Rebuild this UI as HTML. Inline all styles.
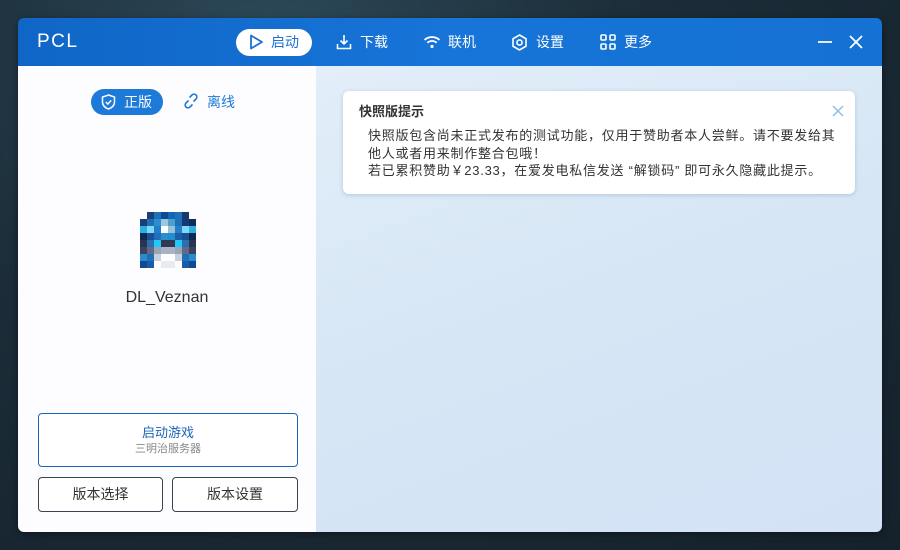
<!DOCTYPE html>
<html><head><meta charset="utf-8"><style>
*{margin:0;padding:0;box-sizing:border-box}
body{width:900px;height:550px;overflow:hidden;position:relative;font-family:"Liberation Sans","Noto Sans CJK SC",sans-serif;
background:radial-gradient(ellipse at 30% 10%,#2d4a5a 0%,#1c2e3a 40%,#15212b 100%);}
.win{position:absolute;left:18px;top:18px;width:864px;height:514px;border-radius:6px;overflow:hidden;box-shadow:0 2px 8px rgba(0,0,0,.4)}
.bar{position:absolute;left:0;top:0;width:864px;height:48px;background:linear-gradient(90deg,#0f66c6,#1774d8 50%,#1572d4)}
.logo{position:absolute;left:19px;top:13px;color:#fff;font-size:19px;letter-spacing:1.5px}
.nav{position:absolute;top:11px;height:27px;color:#fff;font-size:14px;line-height:27px}
.nav svg{position:absolute;top:5px}
.nav span{position:absolute;white-space:nowrap}
.left{position:absolute;left:0;top:48px;width:298px;height:466px;background:#fdfdff}
.right{position:absolute;left:298px;top:48px;width:566px;height:466px;background:linear-gradient(160deg,#e2eef9 0%,#d6e6f5 50%,#d3e2f5 100%)}
.card{position:absolute;left:27px;top:25px;width:512px;height:103px;background:#fff;border-radius:6px;box-shadow:0 1px 4px rgba(60,90,130,.25)}
.btn{position:absolute;border:1px solid #3a4350;border-radius:4px;text-align:center;font-size:14px;color:#333;background:#fff}
.px{position:absolute;left:122px;top:146px;display:grid;grid-template-columns:repeat(8,7px);grid-template-rows:repeat(8,7px)}
</style></head><body>
<div class="win">
<div class="bar">
 <div class="logo">PCL</div>
 <div style="position:absolute;left:218px;top:11px;width:76px;height:27px;border-radius:14px;background:#fff"></div>
 <div class="nav" style="left:230px;color:#1a72d6">
  <svg width="16" height="16" viewBox="0 0 16 16"><path d="M3 1.5 L14 8 L3 14.5 Z" fill="none" stroke="#1a72d6" stroke-width="1.8" stroke-linejoin="round"/></svg>
  <span style="left:23px">启动</span></div>
 <div class="nav" style="left:318px">
  <svg width="16" height="16" viewBox="0 0 16 16"><path d="M8 1v9M4.5 6.5 8 10l3.5-3.5M1.5 10v4.5h13V10" fill="none" stroke="#fff" stroke-width="1.6"/></svg>
  <span style="left:24px">下载</span></div>
 <div class="nav" style="left:405px">
  <svg width="18" height="16" viewBox="0 0 18 16"><path d="M1.5 6a11 11 0 0 1 15 0M4.3 8.8a7 7 0 0 1 9.4 0" fill="none" stroke="#fff" stroke-width="1.8"/><circle cx="9" cy="12.5" r="1.6" fill="#fff"/></svg>
  <span style="left:25px">联机</span></div>
 <div class="nav" style="left:493px">
  <svg width="17" height="17" viewBox="0 0 17 17"><path d="M8.5 1 15 4.75v7.5L8.5 16 2 12.25v-7.5Z" fill="none" stroke="#fff" stroke-width="1.6"/><circle cx="8.5" cy="8.5" r="2.6" fill="none" stroke="#fff" stroke-width="1.6"/></svg>
  <span style="left:25px">设置</span></div>
 <div class="nav" style="left:582px">
  <svg width="16" height="16" viewBox="0 0 16 16" fill="none" stroke="#fff" stroke-width="1.6"><rect x="1" y="1" width="5" height="5" rx="1"/><rect x="10" y="1" width="5" height="5" rx="1"/><rect x="1" y="10" width="5" height="5" rx="1"/><rect x="10" y="10" width="5" height="5" rx="1"/></svg>
  <span style="left:24px">更多</span></div>
 <svg style="position:absolute;left:799px;top:17px" width="16" height="14"><path d="M1 7h14" stroke="#fff" stroke-width="1.8"/></svg>
 <svg style="position:absolute;left:831px;top:17px" width="14" height="14"><path d="M1 1l12 12M13 1 1 13" stroke="#fff" stroke-width="1.8"/></svg>
</div>
<div class="left">
 <div style="position:absolute;left:73px;top:23px;width:72px;height:26px;border-radius:13px;background:#1e7ad8;color:#fff;font-size:14px;line-height:26px">
  <svg style="position:absolute;left:10px;top:5px" width="15" height="16" viewBox="0 0 15 16"><path d="M7.5 1 13.5 3v5c0 3.5-2.8 6-6 7-3.2-1-6-3.5-6-7V3Z" fill="none" stroke="#fff" stroke-width="1.5"/><path d="M4.8 8l2 2 3.4-3.6" fill="none" stroke="#fff" stroke-width="1.5"/></svg>
  <span style="position:absolute;left:33px">正版</span></div>
 <svg style="position:absolute;left:165px;top:27px" width="16" height="16" viewBox="0 0 16 16" fill="none" stroke="#1e7ad8" stroke-width="1.6"><path d="M6.5 4.5 9 2a2.8 2.8 0 0 1 4 4l-2.5 2.5M9.5 11.5 7 14a2.8 2.8 0 0 1-4-4l2.5-2.5"/></svg>
 <div style="position:absolute;left:189px;top:23px;line-height:26px;font-size:14px;color:#1e7ad8">离线</div>
 <div class="px">
  <i></i><i style="background:#1a3f78"></i><i style="background:#1f70b8"></i><i style="background:#0d4a95"></i><i style="background:#1565b5"></i><i style="background:#1f70b8"></i><i style="background:#163a70"></i><i></i>
  <i style="background:#1a3f78"></i><i style="background:#1f6fb5"></i><i style="background:#2c8ed0"></i><i style="background:#9bc8dc"></i><i style="background:#4f9fcc"></i><i style="background:#1f6fb5"></i><i style="background:#163a70"></i><i style="background:#102c5a"></i>
  <i style="background:#2ab0e0"></i><i style="background:#7fd8f5"></i><i style="background:#1f7fc8"></i><i style="background:#fff"></i><i style="background:#9cc0d8"></i><i style="background:#1f7fc8"></i><i style="background:#7fd8f5"></i><i style="background:#2ab0e0"></i>
  <i style="background:#0e2a50"></i><i style="background:#1a4f95"></i><i style="background:#1f70b8"></i><i style="background:#2c8ed0"></i><i style="background:#1f8fd0"></i><i style="background:#1a5fa5"></i><i style="background:#1a4f95"></i><i style="background:#0e2a50"></i>
  <i style="background:#2a3450"></i><i style="background:#2a6fb0"></i><i style="background:#24c8f5"></i><i style="background:#303a55"></i><i style="background:#303a55"></i><i style="background:#24c8f5"></i><i style="background:#2a6fb0"></i><i style="background:#2a3450"></i>
  <i style="background:#3a4260"></i><i style="background:#606a85"></i><i style="background:#9aa5b8"></i><i style="background:#a8b4c5"></i><i style="background:#a8b4c5"></i><i style="background:#9aa5b8"></i><i style="background:#606a85"></i><i style="background:#3a4260"></i>
  <i style="background:#2a8ad0"></i><i style="background:#1f70b8"></i><i style="background:#c8d0dc"></i><i style="background:#fff"></i><i style="background:#fff"></i><i style="background:#c8d0dc"></i><i style="background:#1f70b8"></i><i style="background:#2a8ad0"></i>
  <i style="background:#124a90"></i><i style="background:#1a5ca8"></i><i></i><i style="background:#e8ecf0"></i><i style="background:#e8ecf0"></i><i></i><i style="background:#1a5ca8"></i><i style="background:#124a90"></i>
 </div>
 <div style="position:absolute;left:0;width:298px;top:223px;text-align:center;font-size:16px;color:#333">DL_Veznan</div>
 <div class="btn" style="left:20px;top:347px;width:260px;height:54px;border-color:#1a64b8">
  <div style="margin-top:10px;color:#1a64b8;font-size:13px;line-height:17px">启动游戏</div>
  <div style="color:#888;font-size:11px;line-height:16px">三明治服务器</div></div>
 <div class="btn" style="left:20px;top:411px;width:125px;height:35px;line-height:33px">版本选择</div>
 <div class="btn" style="left:154px;top:411px;width:126px;height:35px;line-height:33px">版本设置</div>
</div>
<div class="right">
 <div class="card">
  <div style="position:absolute;left:16px;top:10px;font-size:13px;font-weight:bold;color:#333">快照版提示</div>
  <svg style="position:absolute;left:489px;top:14px" width="12" height="12"><path d="M1 1l10 10M11 1 1 11" stroke="#8bbbe8" stroke-width="1.4"/></svg>
  <div style="position:absolute;left:25px;top:36px;width:468px;font-size:13px;letter-spacing:0.75px;line-height:17.5px;color:#333">快照版包含尚未正式发布的测试功能，仅用于赞助者本人尝鲜。请不要发给其他人或者用来制作整合包哦！<br>若已累积赞助￥23.33，在爱发电私信发送 “解锁码” 即可永久隐藏此提示。</div>
 </div>
</div>
</div>
</body></html>
